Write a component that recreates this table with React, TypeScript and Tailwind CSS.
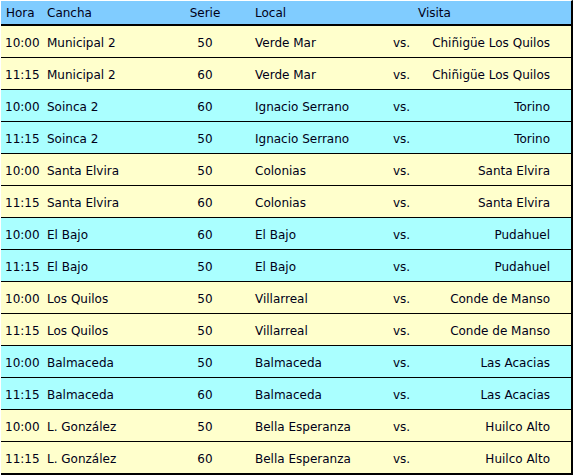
import React from "react";

type Row = [string, string, string, string, string];

const rows: Row[] = [
  ["10:00", "Municipal 2", "50", "Verde Mar", "Chiñigüe Los Quilos"],
  ["11:15", "Municipal 2", "60", "Verde Mar", "Chiñigüe Los Quilos"],
  ["10:00", "Soinca 2", "60", "Ignacio Serrano", "Torino"],
  ["11:15", "Soinca 2", "50", "Ignacio Serrano", "Torino"],
  ["10:00", "Santa Elvira", "50", "Colonias", "Santa Elvira"],
  ["11:15", "Santa Elvira", "60", "Colonias", "Santa Elvira"],
  ["10:00", "El Bajo", "60", "El Bajo", "Pudahuel"],
  ["11:15", "El Bajo", "50", "El Bajo", "Pudahuel"],
  ["10:00", "Los Quilos", "50", "Villarreal", "Conde de Manso"],
  ["11:15", "Los Quilos", "50", "Villarreal", "Conde de Manso"],
  ["10:00", "Balmaceda", "50", "Balmaceda", "Las Acacias"],
  ["11:15", "Balmaceda", "60", "Balmaceda", "Las Acacias"],
  ["10:00", "L. González", "50", "Bella Esperanza", "Huilco Alto"],
  ["11:15", "L. González", "60", "Bella Esperanza", "Huilco Alto"],
];

export default function App() {
  return (
    <div
      className="w-[573px] h-[475px] bg-white text-[12px] text-[#000018]"
      style={{ fontFamily: '"DejaVu Sans", Verdana, sans-serif' }}
    >
      <div className="border-t border-white border-l border-r-2 border-r-black">
        <div className="flex items-center h-[25px] pt-[1px] bg-[#80ccff] border-b-2 border-black pl-[4px]">
          <div className="w-[42px] pl-[1px]">Hora</div>
          <div className="w-[128px]">Cancha</div>
          <div className="w-[60px] text-center">Serie</div>
          <div className="w-[20px]" />
          <div className="w-[138px]">Local</div>
          <div className="w-[25px]" />
          <div className="flex-1">Visita</div>
        </div>
        {rows.map((r, i) => {
          const yellow = Math.floor(i / 2) % 2 === 0;
          const last = i === rows.length - 1;
          return (
            <div
              key={i}
              className={`flex items-center pt-[2px] pl-[4px] pr-[21px] border-black ${
                last ? "h-[33px] border-b-2" : "h-[32px] border-b"
              } ${yellow ? "bg-[#ffffcc]" : "bg-[#aaffff]"}`}
            >
              <div className="w-[42px]">{r[0]}</div>
              <div className="w-[128px]">{r[1]}</div>
              <div className="w-[60px] text-center">{r[2]}</div>
              <div className="w-[20px]" />
              <div className="w-[138px]">{r[3]}</div>
              <div className="w-[25px]">vs.</div>
              <div className="flex-1 text-right">{r[4]}</div>
            </div>
          );
        })}
      </div>
    </div>
  );
}
